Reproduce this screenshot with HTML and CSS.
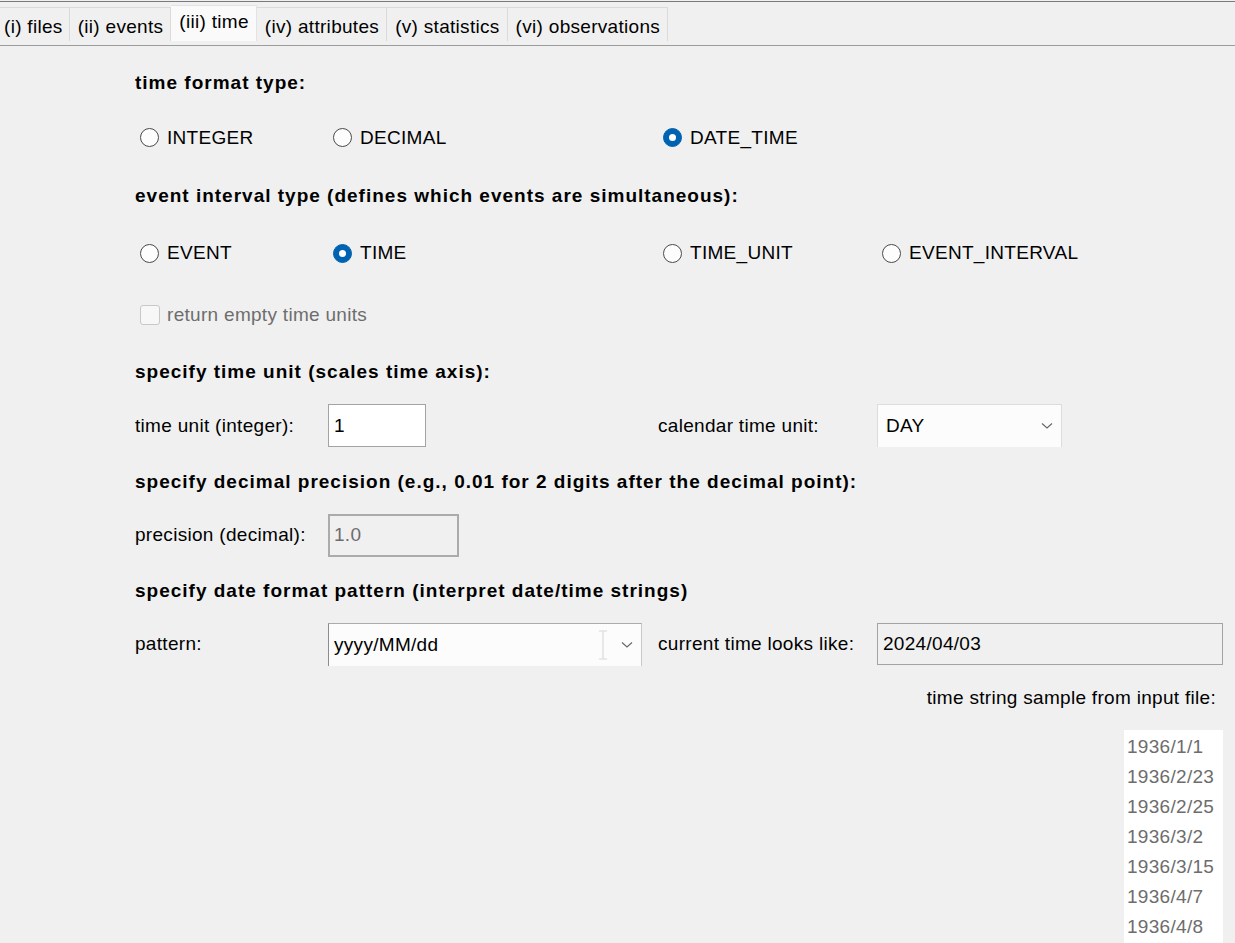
FILE: index.html
```html
<!DOCTYPE html>
<html>
<head>
<meta charset="utf-8">
<link rel="stylesheet" href="styles.css">
</head>
<body>
<div class="topline"></div>
<div class="tabbar">
  <div class="tab first">(i) files</div>
  <div class="tab">(ii) events</div>
  <div class="tab active">(iii) time</div>
  <div class="tab">(iv) attributes</div>
  <div class="tab">(v) statistics</div>
  <div class="tab">(vi) observations</div>
</div>
<div class="tabline"></div>
<div class="panel">
  <div class="row h56 heading">time format type:</div>
  <div class="row h57 grid">
    <label class="radio"><span class="dot"></span>INTEGER</label>
    <label class="radio"><span class="dot"></span>DECIMAL</label>
    <label class="radio"><span class="dot on"></span>DATE_TIME</label>
    <span></span>
  </div>
  <div class="row h57 heading">event interval type (defines which events are simultaneous):</div>
  <div class="row h60 grid">
    <label class="radio"><span class="dot"></span>EVENT</label>
    <label class="radio"><span class="dot on"></span>TIME</label>
    <label class="radio"><span class="dot"></span>TIME_UNIT</label>
    <label class="radio"><span class="dot"></span>EVENT_INTERVAL</label>
  </div>
  <div class="row h60 cbrow">
    <label class="check"><span class="box"></span>return empty time units</label>
  </div>
  <div class="row h55 heading">specify time unit (scales time axis):</div>
  <div class="row h55 grid">
    <span>time unit (integer):</span>
    <div class="field tinput">1</div>
    <span>calendar time unit:</span>
    <div class="field combo cal">DAY
      <svg class="chev" width="12" height="8" viewBox="0 0 12 8"><path d="M1 1.5 L6 6 L11 1.5" fill="none" stroke="#666" stroke-width="1.1"/></svg>
    </div>
  </div>
  <div class="row h55 heading">specify decimal precision (e.g., 0.01 for 2 digits after the decimal point):</div>
  <div class="row h54 grid">
    <span>precision (decimal):</span>
    <div class="field prec">1.0</div>
  </div>
  <div class="row h55 heading">specify date format pattern (interpret date/time strings)</div>
  <div class="row h54 grid">
    <span>pattern:</span>
    <div class="field combo pat">yyyy/MM/dd
      <span class="pat-right">
        <svg class="ibeam" width="10" height="30" viewBox="0 0 10 30"><path d="M1 1 H9 M5 1 V29 M1 29 H9" fill="none" stroke="#e2e2e2" stroke-width="1.6"/></svg>
        <svg class="chev" width="12" height="8" viewBox="0 0 12 8"><path d="M1 1.5 L6 6 L11 1.5" fill="none" stroke="#666" stroke-width="1.1"/></svg>
      </span>
    </div>
    <span>current time looks like:</span>
    <div class="field cur">2024/04/03</div>
  </div>
  <div class="row h54 sample-label">time string sample from input file:</div>
  <div class="samples">
    <div class="item">1936/1/1</div>
    <div class="item">1936/2/23</div>
    <div class="item">1936/2/25</div>
    <div class="item">1936/3/2</div>
    <div class="item">1936/3/15</div>
    <div class="item">1936/4/7</div>
    <div class="item">1936/4/8</div>
  </div>
</div>
</body>
</html>
```
FILE: styles.css
```css
html, body {
  margin: 0;
  padding: 0;
  background: #f0f0f0;
  height: 943px;
  overflow: hidden;
}
body {
  font-family: "Liberation Sans", Arial, sans-serif;
  font-size: 19px;
  letter-spacing: 0.3px;
  color: #000;
}
.topline {
  margin-top: 1px;
  height: 1px;
  background: #7a7a7a;
}
.tabbar {
  display: flex;
  align-items: flex-end;
  height: 39px;
  padding-bottom: 4px;
}
.tab {
  box-sizing: border-box;
  height: 34px;
  padding: 4px 7px 0 8px;
  display: flex;
  align-items: center;
  border: 1px solid #dadada;
  border-bottom: none;
  border-left: none;
  background: #f0f0f0;
  white-space: nowrap;
}
.tab.first {
  padding-left: 4px;
  padding-right: 6px;
}
.tab.active {
  height: 36px;
  padding-top: 0;
  padding-bottom: 4px;
  background: #fafafa;
  border-color: #e3e3e3;
}
.tabline {
  height: 1px;
  background: #9c9c9c;
}
.panel {
  padding-top: 7px;
  padding-left: 135px;
}
.row {
  display: flex;
  align-items: center;
  box-sizing: border-box;
}
.h54 { height: 54px; }
.h55 { height: 55px; }
.h56 { height: 56px; }
.h57 { height: 57px; }
.h60 { height: 60px; }
.heading {
  font-weight: bold;
  letter-spacing: 1px;
  padding-top: 3px;
}
.cbrow {
  padding-top: 4px;
}
.grid {
  display: grid;
  grid-template-columns: 193px 330px 219px 346px;
  align-items: center;
}
.radio {
  display: flex;
  align-items: center;
  gap: 8px;
  margin-left: 5px;
}
.dot {
  box-sizing: border-box;
  width: 19px;
  height: 19px;
  border-radius: 50%;
  border: 1px solid #4a4a4a;
  background: #fdfdfd;
  position: relative;
}
.dot.on {
  background: #0063b1;
  border-color: #0063b1;
}
.dot.on::after {
  content: "";
  position: absolute;
  left: 5px;
  top: 5px;
  width: 7px;
  height: 7px;
  border-radius: 50%;
  background: #fff;
}
.check {
  display: flex;
  align-items: center;
  gap: 7px;
  margin-left: 5px;
  color: #6d6d6d;
}
.box {
  box-sizing: border-box;
  width: 20px;
  height: 20px;
  border: 1px solid #c8c8c8;
  border-radius: 3px;
  background: #f7f7f7;
}
.field {
  box-sizing: border-box;
  height: 43px;
  display: flex;
  align-items: center;
}
.tinput {
  width: 98px;
  background: #fff;
  border: 1px solid #a3a3a3;
  padding-left: 5px;
}
.prec {
  width: 131px;
  background: #f0f0f0;
  border: 2px solid #ababab;
  padding-left: 4px;
  color: #6d6d6d;
}
.combo {
  background: #fcfcfc;
  justify-content: space-between;
  border-bottom: none;
}
.cal {
  width: 185px;
  border: 1px solid #dcdcdc;
  border-bottom: none;
  padding-left: 8px;
  padding-right: 8px;
}
.pat {
  width: 314px;
  border-top: 1px solid #ababab;
  border-left: 1px solid #8c8c8c;
  border-right: 1px solid #c9c9c9;
  padding-left: 5px;
  padding-right: 8px;
}
.pat-right {
  display: flex;
  align-items: center;
  gap: 13px;
}
.chev {
  display: block;
}
.ibeam {
  display: block;
}
.cur {
  width: 346px;
  height: 42px;
  background: #f0f0f0;
  border: 1px solid #a3a3a3;
  padding-left: 5px;
}
.sample-label {
  justify-content: flex-end;
  padding-right: 19px;
}
.samples {
  margin-top: 5px;
  margin-left: 989px;
  width: 99px;
  background: #fff;
  height: 240px;
  padding-top: 2px;
}
.item {
  height: 30px;
  line-height: 30px;
  padding-left: 3px;
  color: #6d6d6d;
}
```
